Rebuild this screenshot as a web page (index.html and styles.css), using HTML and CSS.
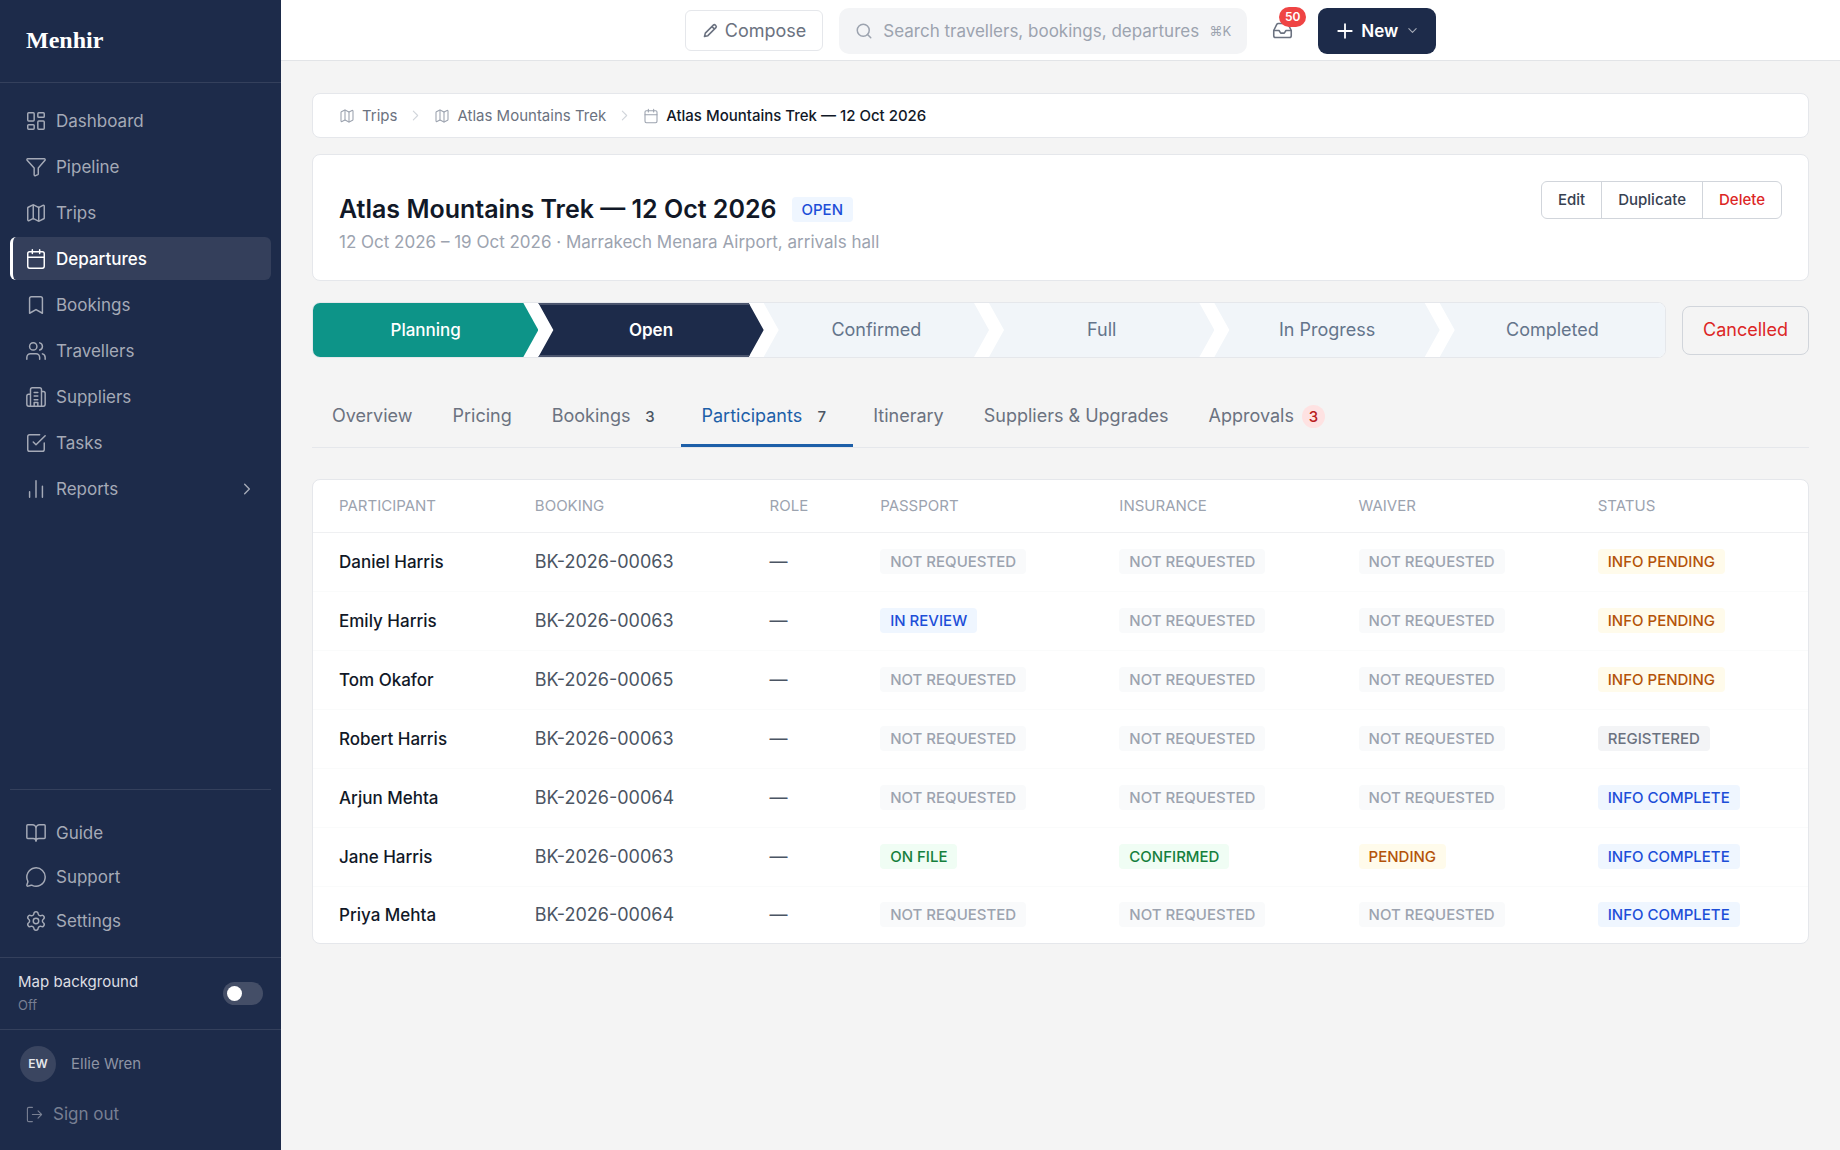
FILE: index.html
```html
<!DOCTYPE html>
<html lang="en">
<head>
    <meta charset="UTF-8">
    <meta name="viewport" content="width=device-width, initial-scale=1.0">
    <title>Atlas Mountains Trek — 12 Oct 2026 · Menhir</title>
    <link rel="stylesheet" href="styles.css">
</head>
<body>
    <!-- Icon sprite -->
    <svg class="sprite" aria-hidden="true">
        <symbol id="i-dashboard" viewBox="0 0 24 24"><rect x="3" y="3" width="7" height="9" rx="1"/><rect x="14" y="3" width="7" height="5" rx="1"/><rect x="14" y="12" width="7" height="9" rx="1"/><rect x="3" y="16" width="7" height="5" rx="1"/></symbol>
        <symbol id="i-funnel" viewBox="0 0 24 24"><path d="M3 3h18a1 1 0 0 1 .8 1.6L14.5 13v6.5a1 1 0 0 1-.5.8l-2.5 1.2a1 1 0 0 1-1.5-.9V13L2.3 4.6A1 1 0 0 1 3 3z"/></symbol>
        <symbol id="i-map" viewBox="0 0 24 24"><path d="M14.1 5.55a2 2 0 0 0 1.8 0l3.65-1.83A1 1 0 0 1 21 4.62v12.76a1 1 0 0 1-.55.9l-4.55 2.27a2 2 0 0 1-1.8 0l-4.2-2.1a2 2 0 0 0-1.8 0l-3.65 1.83A1 1 0 0 1 3 19.38V6.62a1 1 0 0 1 .55-.9L8.1 3.45a2 2 0 0 1 1.8 0z"/><path d="M15 5.8v15M9 3.2v15"/></symbol>
        <symbol id="i-calendar" viewBox="0 0 24 24"><path d="M8 2v4M16 2v4M3 10h18"/><rect x="3" y="4" width="18" height="18" rx="2"/></symbol>
        <symbol id="i-bookmark" viewBox="0 0 24 24"><path d="m19 21-7-4-7 4V5a2 2 0 0 1 2-2h10a2 2 0 0 1 2 2z"/></symbol>
        <symbol id="i-users" viewBox="0 0 24 24"><path d="M16 21v-2a4 4 0 0 0-4-4H6a4 4 0 0 0-4 4v2"/><circle cx="9" cy="7" r="4"/><path d="M22 21v-2a4 4 0 0 0-3-3.87M16 3.13a4 4 0 0 1 0 7.75"/></symbol>
        <symbol id="i-building" viewBox="0 0 24 24"><path d="M6 22V4a2 2 0 0 1 2-2h8a2 2 0 0 1 2 2v18zM6 9H4a2 2 0 0 0-2 2v9a2 2 0 0 0 2 2h2M18 6h2a2 2 0 0 1 2 2v12a2 2 0 0 1-2 2h-2M10 7h4M10 11h4M10 15h4M10 22v-4h4v4"/></symbol>
        <symbol id="i-task" viewBox="0 0 24 24"><path d="m9 11 3 3L22 4"/><path d="M21 12v7a2 2 0 0 1-2 2H5a2 2 0 0 1-2-2V5a2 2 0 0 1 2-2h11"/></symbol>
        <symbol id="i-bars" viewBox="0 0 24 24"><path d="M5 21v-6M12 21V3M19 21V9"/></symbol>
        <symbol id="i-book" viewBox="0 0 24 24"><path d="M12 7v14M3 18a1 1 0 0 1-1-1V4a1 1 0 0 1 1-1h5a4 4 0 0 1 4 4 4 4 0 0 1 4-4h5a1 1 0 0 1 1 1v13a1 1 0 0 1-1 1h-6a3 3 0 0 0-3 3 3 3 0 0 0-3-3z"/></symbol>
        <symbol id="i-chat" viewBox="0 0 24 24"><path d="M2.99 16.34a2 2 0 0 1 .1 1.17l-1.07 3.29a1 1 0 0 0 1.24 1.17l3.41-1a2 2 0 0 1 1.1.09 10 10 0 1 0-4.78-4.72z"/></symbol>
        <symbol id="i-gear" viewBox="0 0 24 24"><path d="M9.67 4.14a2.34 2.34 0 0 1 4.66 0 2.34 2.34 0 0 0 3.32 1.91 2.34 2.34 0 0 1 2.33 4.03 2.34 2.34 0 0 0 0 3.84 2.34 2.34 0 0 1-2.33 4.03 2.34 2.34 0 0 0-3.32 1.91 2.34 2.34 0 0 1-4.66 0 2.34 2.34 0 0 0-3.32-1.91 2.34 2.34 0 0 1-2.33-4.03 2.34 2.34 0 0 0 0-3.84 2.34 2.34 0 0 1 2.33-4.03 2.34 2.34 0 0 0 3.32-1.91"/><circle cx="12" cy="12" r="3"/></symbol>
        <symbol id="i-signout" viewBox="0 0 24 24"><path d="M9 22H4a2 2 0 0 1-2-2V4a2 2 0 0 1 2-2h5M17 17l5-5-5-5M22 12H9"/></symbol>
        <symbol id="i-pencil" viewBox="0 0 24 24"><path d="M3.5 20.5l1.2-4.8L16 4.4a2 2 0 0 1 2.8 0l.8.8a2 2 0 0 1 0 2.8L8.3 19.3zM14 6.4 17.6 10"/></symbol>
        <symbol id="i-search" viewBox="0 0 24 24"><circle cx="11" cy="11" r="8"/><path d="m21 21-4.3-4.3"/></symbol>
        <symbol id="i-inbox" viewBox="0 0 24 24"><path d="M22 12h-6l-2 3h-4l-2-3H2"/><path d="M5.45 5.11 2 12v6a2 2 0 0 0 2 2h16a2 2 0 0 0 2-2v-6l-3.45-6.89A2 2 0 0 0 16.76 4H7.24a2 2 0 0 0-1.79 1.11z"/></symbol>
        <symbol id="i-plus" viewBox="0 0 24 24"><path d="M3 12h18M12 3v18"/></symbol>
        <symbol id="i-down" viewBox="0 0 24 24"><path d="m4 8 8 8 8-8"/></symbol>
        <symbol id="i-right" viewBox="0 0 24 24"><path d="m8 4 8 8-8 8"/></symbol>
    </svg>

    <div class="app">
        <aside class="sidebar">
            <div class="brand">Menhir</div>
            <nav class="nav" aria-label="Main">
                <a class="nav-item" href="#"><svg class="icon"><use href="#i-dashboard"/></svg>Dashboard</a>
                <a class="nav-item" href="#"><svg class="icon"><use href="#i-funnel"/></svg>Pipeline</a>
                <a class="nav-item" href="#"><svg class="icon"><use href="#i-map"/></svg>Trips</a>
                <a class="nav-item active" href="#" aria-current="page"><svg class="icon"><use href="#i-calendar"/></svg>Departures</a>
                <a class="nav-item" href="#"><svg class="icon"><use href="#i-bookmark"/></svg>Bookings</a>
                <a class="nav-item" href="#"><svg class="icon"><use href="#i-users"/></svg>Travellers</a>
                <a class="nav-item" href="#"><svg class="icon"><use href="#i-building"/></svg>Suppliers</a>
                <a class="nav-item" href="#"><svg class="icon"><use href="#i-task"/></svg>Tasks</a>
                <a class="nav-item" href="#"><svg class="icon"><use href="#i-bars"/></svg>Reports<svg class="icon nav-chevron"><use href="#i-right"/></svg></a>
            </nav>
            <nav class="nav nav-secondary" aria-label="Help">
                <a class="nav-item" href="#"><svg class="icon"><use href="#i-book"/></svg>Guide</a>
                <a class="nav-item" href="#"><svg class="icon"><use href="#i-chat"/></svg>Support</a>
                <a class="nav-item" href="#"><svg class="icon"><use href="#i-gear"/></svg>Settings</a>
            </nav>
            <div class="map-toggle">
                <label for="map-bg">Map background<span class="map-state">Off</span></label>
                <input class="switch" type="checkbox" role="switch" id="map-bg">
            </div>
            <div class="account">
                <div class="user"><span class="avatar">EW</span>Ellie Wren</div>
                <button class="signout" type="button"><svg class="icon"><use href="#i-signout"/></svg>Sign out</button>
            </div>
        </aside>

        <div class="page">
            <header class="topbar">
                <button class="compose" type="button"><svg class="icon"><use href="#i-pencil"/></svg>Compose</button>
                <label class="search">
                    <svg class="icon"><use href="#i-search"/></svg>
                    <input type="text" aria-label="Search" placeholder="Search travellers, bookings, departures…">
                    <kbd>⌘K</kbd>
                </label>
                <button class="inbox" type="button" aria-label="Inbox"><svg class="icon"><use href="#i-inbox"/></svg><span class="inbox-count">50</span></button>
                <button class="new" type="button"><svg class="icon"><use href="#i-plus"/></svg>New<svg class="icon new-chevron"><use href="#i-down"/></svg></button>
            </header>

            <main class="content">
                <nav class="card breadcrumb" aria-label="Breadcrumb">
                    <a href="#"><svg class="icon"><use href="#i-map"/></svg>Trips</a>
                    <svg class="icon sep"><use href="#i-right"/></svg>
                    <a href="#"><svg class="icon"><use href="#i-map"/></svg>Atlas Mountains Trek</a>
                    <svg class="icon sep"><use href="#i-right"/></svg>
                    <span class="current"><svg class="icon"><use href="#i-calendar"/></svg>Atlas Mountains Trek — 12 Oct 2026</span>
                </nav>

                <section class="card summary">
                    <div>
                        <div class="title-row">
                            <h1>Atlas Mountains Trek — 12 Oct 2026</h1>
                            <span class="tag blue">OPEN</span>
                        </div>
                        <p class="subtitle">12 Oct 2026 – 19 Oct 2026 · Marrakech Menara Airport, arrivals hall</p>
                    </div>
                    <div class="actions">
                        <button type="button">Edit</button>
                        <button type="button">Duplicate</button>
                        <button type="button" class="danger">Delete</button>
                    </div>
                </section>

                <div class="stage-row">
                    <div class="stages">
                        <button type="button" class="stage done">Planning</button>
                        <button type="button" class="stage now" aria-current="step">Open</button>
                        <button type="button" class="stage">Confirmed</button>
                        <button type="button" class="stage">Full</button>
                        <button type="button" class="stage">In Progress</button>
                        <button type="button" class="stage">Completed</button>
                    </div>
                    <button type="button" class="cancelled">Cancelled</button>
                </div>

                <nav class="tabs" aria-label="Departure sections">
                    <a class="tab" href="#">Overview</a>
                    <a class="tab" href="#">Pricing</a>
                    <a class="tab" href="#">Bookings<span class="count">3</span></a>
                    <a class="tab active" href="#">Participants<span class="count">7</span></a>
                    <a class="tab" href="#">Itinerary</a>
                    <a class="tab" href="#">Suppliers &amp; Upgrades</a>
                    <a class="tab" href="#">Approvals<span class="count alert">3</span></a>
                </nav>

                <div class="card table-card">
                    <table class="participants">
                        <colgroup>
                            <col class="col-name"><col class="col-booking"><col class="col-role"><col class="col-doc"><col class="col-doc"><col class="col-doc"><col>
                        </colgroup>
                        <thead>
                            <tr><th>PARTICIPANT</th><th>BOOKING</th><th>ROLE</th><th>PASSPORT</th><th>INSURANCE</th><th>WAIVER</th><th>STATUS</th></tr>
                        </thead>
                        <tbody>
                            <tr>
                                <td class="name">Daniel Harris</td><td>BK-2026-00063</td><td>—</td>
                                <td><span class="tag none">NOT REQUESTED</span></td>
                                <td><span class="tag none">NOT REQUESTED</span></td>
                                <td><span class="tag none">NOT REQUESTED</span></td>
                                <td><span class="tag amber">INFO PENDING</span></td>
                            </tr>
                            <tr>
                                <td class="name">Emily Harris</td><td>BK-2026-00063</td><td>—</td>
                                <td><span class="tag blue">IN REVIEW</span></td>
                                <td><span class="tag none">NOT REQUESTED</span></td>
                                <td><span class="tag none">NOT REQUESTED</span></td>
                                <td><span class="tag amber">INFO PENDING</span></td>
                            </tr>
                            <tr>
                                <td class="name">Tom Okafor</td><td>BK-2026-00065</td><td>—</td>
                                <td><span class="tag none">NOT REQUESTED</span></td>
                                <td><span class="tag none">NOT REQUESTED</span></td>
                                <td><span class="tag none">NOT REQUESTED</span></td>
                                <td><span class="tag amber">INFO PENDING</span></td>
                            </tr>
                            <tr>
                                <td class="name">Robert Harris</td><td>BK-2026-00063</td><td>—</td>
                                <td><span class="tag none">NOT REQUESTED</span></td>
                                <td><span class="tag none">NOT REQUESTED</span></td>
                                <td><span class="tag none">NOT REQUESTED</span></td>
                                <td><span class="tag gray">REGISTERED</span></td>
                            </tr>
                            <tr>
                                <td class="name">Arjun Mehta</td><td>BK-2026-00064</td><td>—</td>
                                <td><span class="tag none">NOT REQUESTED</span></td>
                                <td><span class="tag none">NOT REQUESTED</span></td>
                                <td><span class="tag none">NOT REQUESTED</span></td>
                                <td><span class="tag blue">INFO COMPLETE</span></td>
                            </tr>
                            <tr>
                                <td class="name">Jane Harris</td><td>BK-2026-00063</td><td>—</td>
                                <td><span class="tag green">ON FILE</span></td>
                                <td><span class="tag green">CONFIRMED</span></td>
                                <td><span class="tag amber">PENDING</span></td>
                                <td><span class="tag blue">INFO COMPLETE</span></td>
                            </tr>
                            <tr>
                                <td class="name">Priya Mehta</td><td>BK-2026-00064</td><td>—</td>
                                <td><span class="tag none">NOT REQUESTED</span></td>
                                <td><span class="tag none">NOT REQUESTED</span></td>
                                <td><span class="tag none">NOT REQUESTED</span></td>
                                <td><span class="tag blue">INFO COMPLETE</span></td>
                            </tr>
                        </tbody>
                    </table>
                </div>
            </main>
        </div>
    </div>
</body>
</html>
```
FILE: styles.css
```css
* {
    box-sizing: border-box;
}
body {
    margin: 0;
    font-family: Inter, "Liberation Sans", sans-serif;
    font-size: 17px;
    line-height: 24px;
    color: #111827;
    background-color: #f4f4f4;
}
a {
    color: inherit;
    text-decoration: none;
}
button, input {
    font: inherit;
}
button {
    cursor: pointer;
}
.sprite {
    display: none;
}
.icon {
    width: 22px;
    height: 22px;
    flex: none;
    fill: none;
    stroke: currentColor;
    stroke-width: 1.6;
    stroke-linecap: round;
    stroke-linejoin: round;
}
.app {
    display: flex;
    min-height: 100vh;
}

/* Sidebar */
.sidebar {
    display: flex;
    flex-direction: column;
    width: 281px;
    flex: none;
    background-color: #1d2b4a;
    color: #a5aab7;
}
.brand {
    padding: 26px 26px 28px;
    border-bottom: 1px solid #34405c;
    font-family: "Liberation Serif", serif;
    font-size: 24px;
    line-height: 28px;
    font-weight: 700;
    color: #fff;
}
.nav {
    display: flex;
    flex-direction: column;
    gap: 3px;
    padding: 16px 10px;
}
.nav-item {
    display: flex;
    align-items: center;
    gap: 9px;
    height: 43px;
    padding: 0 17px 0 12px;
    border-left: 3px solid transparent;
    border-radius: 6px;
}
.nav-item.active {
    background-color: #343f5b;
    border-left-color: #fff;
    color: #fff;
    font-weight: 500;
}
.nav-chevron {
    width: 14px;
    height: 14px;
    margin-left: auto;
    stroke-width: 2.4;
}
.nav-secondary {
    gap: 1px;
    margin: auto 10px 0;
    padding: 21px 0 15px;
    border-top: 1px solid #34405c;
}
.map-toggle {
    display: flex;
    align-items: center;
    justify-content: space-between;
    padding: 12px 18px 13px;
    border-top: 1px solid #34405c;
    font-size: 15px;
    color: #dddfe4;
}
.map-state {
    display: block;
    font-size: 13px;
    line-height: 22px;
    color: #787f92;
}
.switch {
    appearance: none;
    width: 40px;
    height: 23px;
    margin: 0;
    padding: 4px;
    border-radius: 12px;
    background-color: #444e67;
}
.switch::before {
    content: "";
    display: block;
    width: 15px;
    height: 15px;
    border-radius: 50%;
    background-color: #fff;
}
.switch:checked::before {
    margin-left: auto;
}
.account {
    padding: 16px 20px 24px;
    border-top: 1px solid #34405c;
    font-size: 15px;
    color: #8e94a4;
}
.user {
    display: flex;
    align-items: center;
    gap: 15px;
}
.avatar {
    width: 36px;
    border-radius: 50%;
    background-color: #3a4560;
    color: #e5e7eb;
    font-size: 12px;
    line-height: 36px;
    font-weight: 600;
    text-align: center;
}
.signout {
    display: flex;
    align-items: center;
    gap: 10px;
    margin-top: 20px;
    padding: 0 6px;
    border: 0;
    background: none;
    color: #787f92;
    font-size: 17px;
}
.signout .icon {
    width: 17px;
    height: 17px;
}

/* Top bar */
.page {
    flex: 1;
    min-width: 0;
}
.topbar {
    display: flex;
    align-items: center;
    justify-content: center;
    gap: 16px;
    height: 61px;
    padding-top: 1px;
    background-color: #fff;
    border-bottom: 1px solid #e2e4e7;
}
.compose {
    display: flex;
    align-items: center;
    gap: 6px;
    height: 41px;
    padding: 0 16px;
    border: 1px solid #e5e7eb;
    border-radius: 6px;
    background-color: #fff;
    color: #6b7280;
    font-size: 18px;
}
.compose .icon {
    width: 17px;
    height: 17px;
    stroke-width: 2.2;
}
.search {
    display: flex;
    align-items: center;
    width: 408px;
    height: 46px;
    padding: 0 16px;
    border-radius: 10px;
    background-color: #f3f4f6;
    color: #9ca3af;
}
.search .icon {
    width: 18px;
    height: 18px;
    margin-right: 10px;
    stroke-width: 2;
}
.search input {
    flex: 1;
    min-width: 0;
    padding: 0;
    border: 0;
    outline: 0;
    background: none;
    color: #111827;
}
.search input::placeholder {
    color: #9ca3af;
    opacity: 1;
}
.search kbd {
    margin-left: 10px;
    font-family: Inter, "DejaVu Sans", sans-serif;
    font-size: 13px;
}
.inbox {
    position: relative;
    display: flex;
    align-items: center;
    justify-content: center;
    width: 39px;
    height: 39px;
    padding: 0;
    border: 0;
    background: none;
    color: #6b7280;
}
.inbox .icon {
    width: 21px;
    height: 21px;
    stroke-width: 1.8;
}
.inbox-count {
    position: absolute;
    top: -4px;
    right: -4px;
    width: 27px;
    border-radius: 10px;
    background-color: #ef4444;
    color: #fff;
    font-size: 12px;
    line-height: 20px;
    font-weight: 600;
}
.new {
    display: flex;
    align-items: center;
    height: 46px;
    padding: 0 18px;
    border: 0;
    border-radius: 9px;
    background-color: #1d2b4a;
    color: #fff;
    font-weight: 600;
}
.new .icon {
    width: 18px;
    height: 18px;
    margin-right: 7px;
    stroke-width: 2.4;
}
.new .new-chevron {
    width: 11px;
    height: 11px;
    margin: 0 0 0 9px;
    color: #a5aab7;
}

/* Content */
.content {
    padding: 32px 31px;
}
.card {
    background-color: #fff;
    border: 1px solid #e5e7eb;
    border-radius: 8px;
}
.breadcrumb {
    display: flex;
    align-items: center;
    gap: 12px;
    height: 45px;
    padding: 0 26px;
    font-size: 15px;
    color: #6b7280;
}
.breadcrumb a, .breadcrumb .current {
    display: flex;
    align-items: center;
    gap: 7px;
}
.breadcrumb .current {
    color: #111827;
    font-weight: 500;
}
.breadcrumb .icon {
    width: 16px;
    height: 16px;
    color: #9ca3af;
}
.breadcrumb .sep {
    width: 13px;
    height: 13px;
    color: #d1d5db;
    stroke-width: 2;
}
.summary {
    display: flex;
    align-items: flex-start;
    justify-content: space-between;
    margin-top: 16px;
    padding: 26px;
}
.title-row {
    display: flex;
    align-items: center;
    gap: 15px;
    margin-top: 11px;
}
h1 {
    margin: 0;
    font-size: 25px;
    line-height: 34px;
    font-weight: 600;
}
.subtitle {
    margin: 4px 0 0;
    color: #9ca3af;
}
.tag {
    display: inline-block;
    padding: 0 10px;
    border-radius: 4px;
    font-size: 15px;
    line-height: 25px;
    font-weight: 500;
}
.tag.blue {
    background-color: #eff6ff;
    color: #1d4ed8;
}
.tag.green {
    background-color: #f0fdf4;
    color: #15803d;
}
.tag.amber {
    background-color: #fffbeb;
    color: #b45309;
}
.tag.gray {
    background-color: #f3f4f6;
    color: #6b7280;
}
.tag.none {
    background-color: #f9fafb;
    color: #9ca3af;
}
.actions {
    display: flex;
    border: 1px solid #d1d5db;
    border-radius: 6px;
}
.actions button {
    height: 36px;
    padding: 0 16px;
    border: 0;
    background: none;
    color: #374151;
    font-size: 15px;
    font-weight: 500;
}
.actions button + button {
    border-left: 1px solid #d1d5db;
}
.actions .danger {
    color: #dc2626;
}

/* Stage chevrons */
.stage-row {
    display: flex;
    align-items: center;
    gap: 16px;
    margin-top: 21px;
}
.stages {
    display: flex;
    flex: 1;
    overflow: hidden;
    border: 1px solid #e5e7eb;
    border-radius: 8px;
    background-color: #fff;
}
.stage {
    flex: 1;
    height: 54px;
    padding: 0;
    border: 0;
    background-color: #f1f5f9;
    color: #64748b;
    font-size: 18px;
    clip-path: polygon(0 0, calc(100% - 15px) 0, 100% 50%, calc(100% - 15px) 100%, 0 100%, 15px 50%);
}
.stage:first-child {
    clip-path: polygon(0 0, calc(100% - 15px) 0, 100% 50%, calc(100% - 15px) 100%, 0 100%);
}
.stage:last-child {
    clip-path: polygon(0 0, 100% 0, 100% 100%, 0 100%, 15px 50%);
}
.stage.done {
    background-color: #0d9488;
    color: #fff;
    font-size: 17px;
    font-weight: 500;
}
.stage.now {
    background-color: #1d2b4a;
    border: solid #4b556e;
    border-width: 2px 0;
    color: #fff;
    font-size: 17px;
    font-weight: 600;
}
.cancelled {
    height: 49px;
    padding: 0 20px;
    border: 1px solid #d1d5db;
    border-radius: 8px;
    background: none;
    color: #dc2626;
    font-size: 18px;
}

/* Tabs */
.tabs {
    display: flex;
    margin-top: 28px;
    border-bottom: 1px solid #e5e7eb;
}
.tab {
    display: flex;
    align-items: center;
    gap: 8px;
    height: 61px;
    padding: 2px 20px 0;
    border-bottom: 3px solid transparent;
    color: #6b7280;
    font-size: 18px;
}
.tab.active {
    border-bottom-color: #1d5fa8;
    color: #1d5fa8;
}
.count {
    width: 23px;
    border-radius: 50%;
    color: #4b5563;
    font-size: 15px;
    line-height: 23px;
    font-weight: 500;
    text-align: center;
}
.count.alert {
    background-color: #fee2e2;
    color: #b91c1c;
}

/* Participants table */
.table-card {
    margin-top: 31px;
    overflow: hidden;
}
.participants {
    width: 100%;
    table-layout: fixed;
    border-collapse: collapse;
}
.col-name {
    width: 13.1%;
}
.col-booking {
    width: 15.7%;
}
.col-role {
    width: 7.4%;
}
.col-doc {
    width: 16%;
}
.participants th, .participants td {
    padding: 0 0 0 26px;
    text-align: left;
    white-space: nowrap;
}
.participants th {
    height: 52px;
    border-bottom: 1px solid #eff0f2;
    color: #9ca3af;
    font-size: 15px;
    font-weight: 400;
}
.participants td {
    height: 59px;
    border-bottom: 1px solid #fafbfb;
    color: #4b5563;
    font-size: 18px;
}
.participants tr:last-child td {
    height: 57px;
    border-bottom: 0;
}
.participants .name {
    color: #111827;
    font-size: 17px;
    font-weight: 500;
}
```
